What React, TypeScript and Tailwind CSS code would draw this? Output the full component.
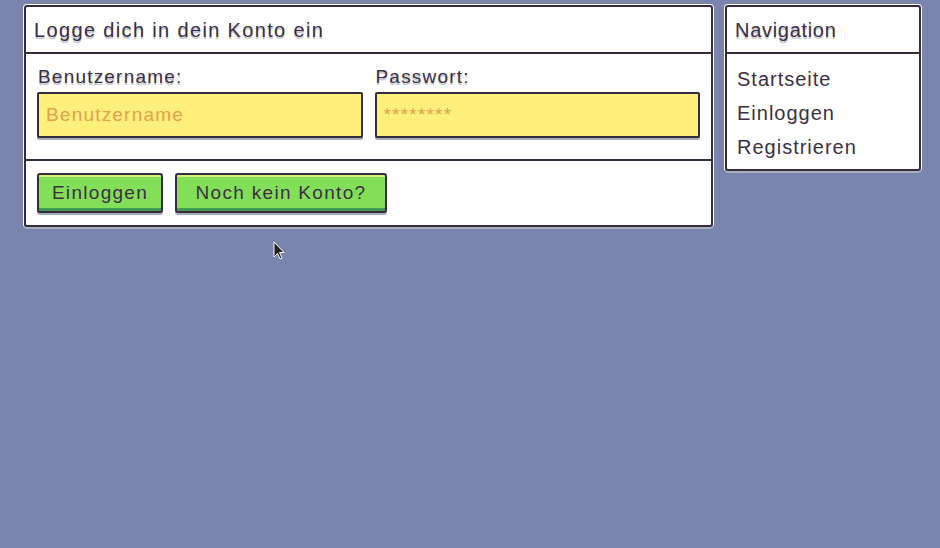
import React from 'react';

const panel =
  'bg-white border-2 border-[#372b3f] rounded-[3px] shadow-[0_2px_0_0_#a9adb8,0_0_0_1px_#ffffff]';
const textShadow = '[text-shadow:0_2px_0_#c3c6cf]';

function Field({ label, placeholder }: { label: string; placeholder: string }) {
  return (
    <div className="flex flex-col flex-1">
      <label className={`text-[19px] leading-[22px] pl-[1px] tracking-[1.2px] text-[#3b3046] ${textShadow}`}>{label}</label>
      <div className="mt-[4px] h-[46px] bg-[#fef07b] border-2 border-[#372b3f] rounded-[2px] shadow-[0_2px_0_0_#a9adb8] flex items-center px-[7px]">
        <span className="text-[19px] tracking-[1.2px] text-[#e3a04f]">{placeholder}</span>
      </div>
    </div>
  );
}

function Button({ children, width }: { children: React.ReactNode; width: string }) {
  return (
    <button className={`${width} h-[40px] bg-[#84df58] border-2 border-[#372b3f] rounded-[3px] text-[19px] tracking-[1.3px] text-[#3b3046] shadow-[inset_0_2px_0_0_#d4f478,inset_0_-3px_0_0_#3f9a52,0_2px_0_0_#a9adb8]`}>
      {children}
    </button>
  );
}

export default function App() {
  return (
    <div
      className="relative w-[940px] h-[548px] bg-[#7a85ad] flex items-start gap-[12px] pl-[24px] pt-[5px]"
      style={{ fontFamily: '"Liberation Sans", Arial, sans-serif' }}
    >
      {/* Login panel */}
      <div className={`${panel} w-[689px] h-[222px] flex flex-col`}>
        <div className={`h-[47px] shrink-0 flex items-center px-[8px] border-b-2 border-[#372b3f] text-[20px] tracking-[1.35px] text-[#3b3046] ${textShadow}`}>
          Logge dich in dein Konto ein
        </div>
        <div className="h-[107px] shrink-0 flex gap-[12px] px-[11px] pt-[12px] border-b-2 border-[#372b3f]">
          <Field label="Benutzername:" placeholder="Benutzername" />
          <Field label="Passwort:" placeholder="********" />
        </div>
        <div className="flex gap-[12px] px-[11px] pt-[12px]">
          <Button width="w-[126px]">Einloggen</Button>
          <Button width="w-[212px]">Noch kein Konto?</Button>
        </div>
      </div>

      {/* Navigation */}
      <div className={`${panel} w-[196px] h-[166px] flex flex-col`}>
        <div className={`h-[47px] shrink-0 flex items-center px-[8px] border-b-2 border-[#372b3f] text-[20px] tracking-[0.7px] text-[#3b3046] ${textShadow}`}>
          Navigation
        </div>
        <ul className="flex flex-col px-[10px] pt-[13px] gap-[10px] text-[20px] leading-[24px] tracking-[1px] text-[#3b3046]">
          <li>Startseite</li>
          <li>Einloggen</li>
          <li>Registrieren</li>
        </ul>
      </div>

      {/* mouse cursor */}
      <svg className="absolute left-[273px] top-[241px]" width="12" height="20" viewBox="0 0 12 20">
        <path d="M1 1 L1 16 L4.5 12.5 L7 18 L9 17 L6.5 11.5 L11 11.5 Z" fill="#222" stroke="#fff" strokeWidth="1" />
      </svg>
    </div>
  );
}
